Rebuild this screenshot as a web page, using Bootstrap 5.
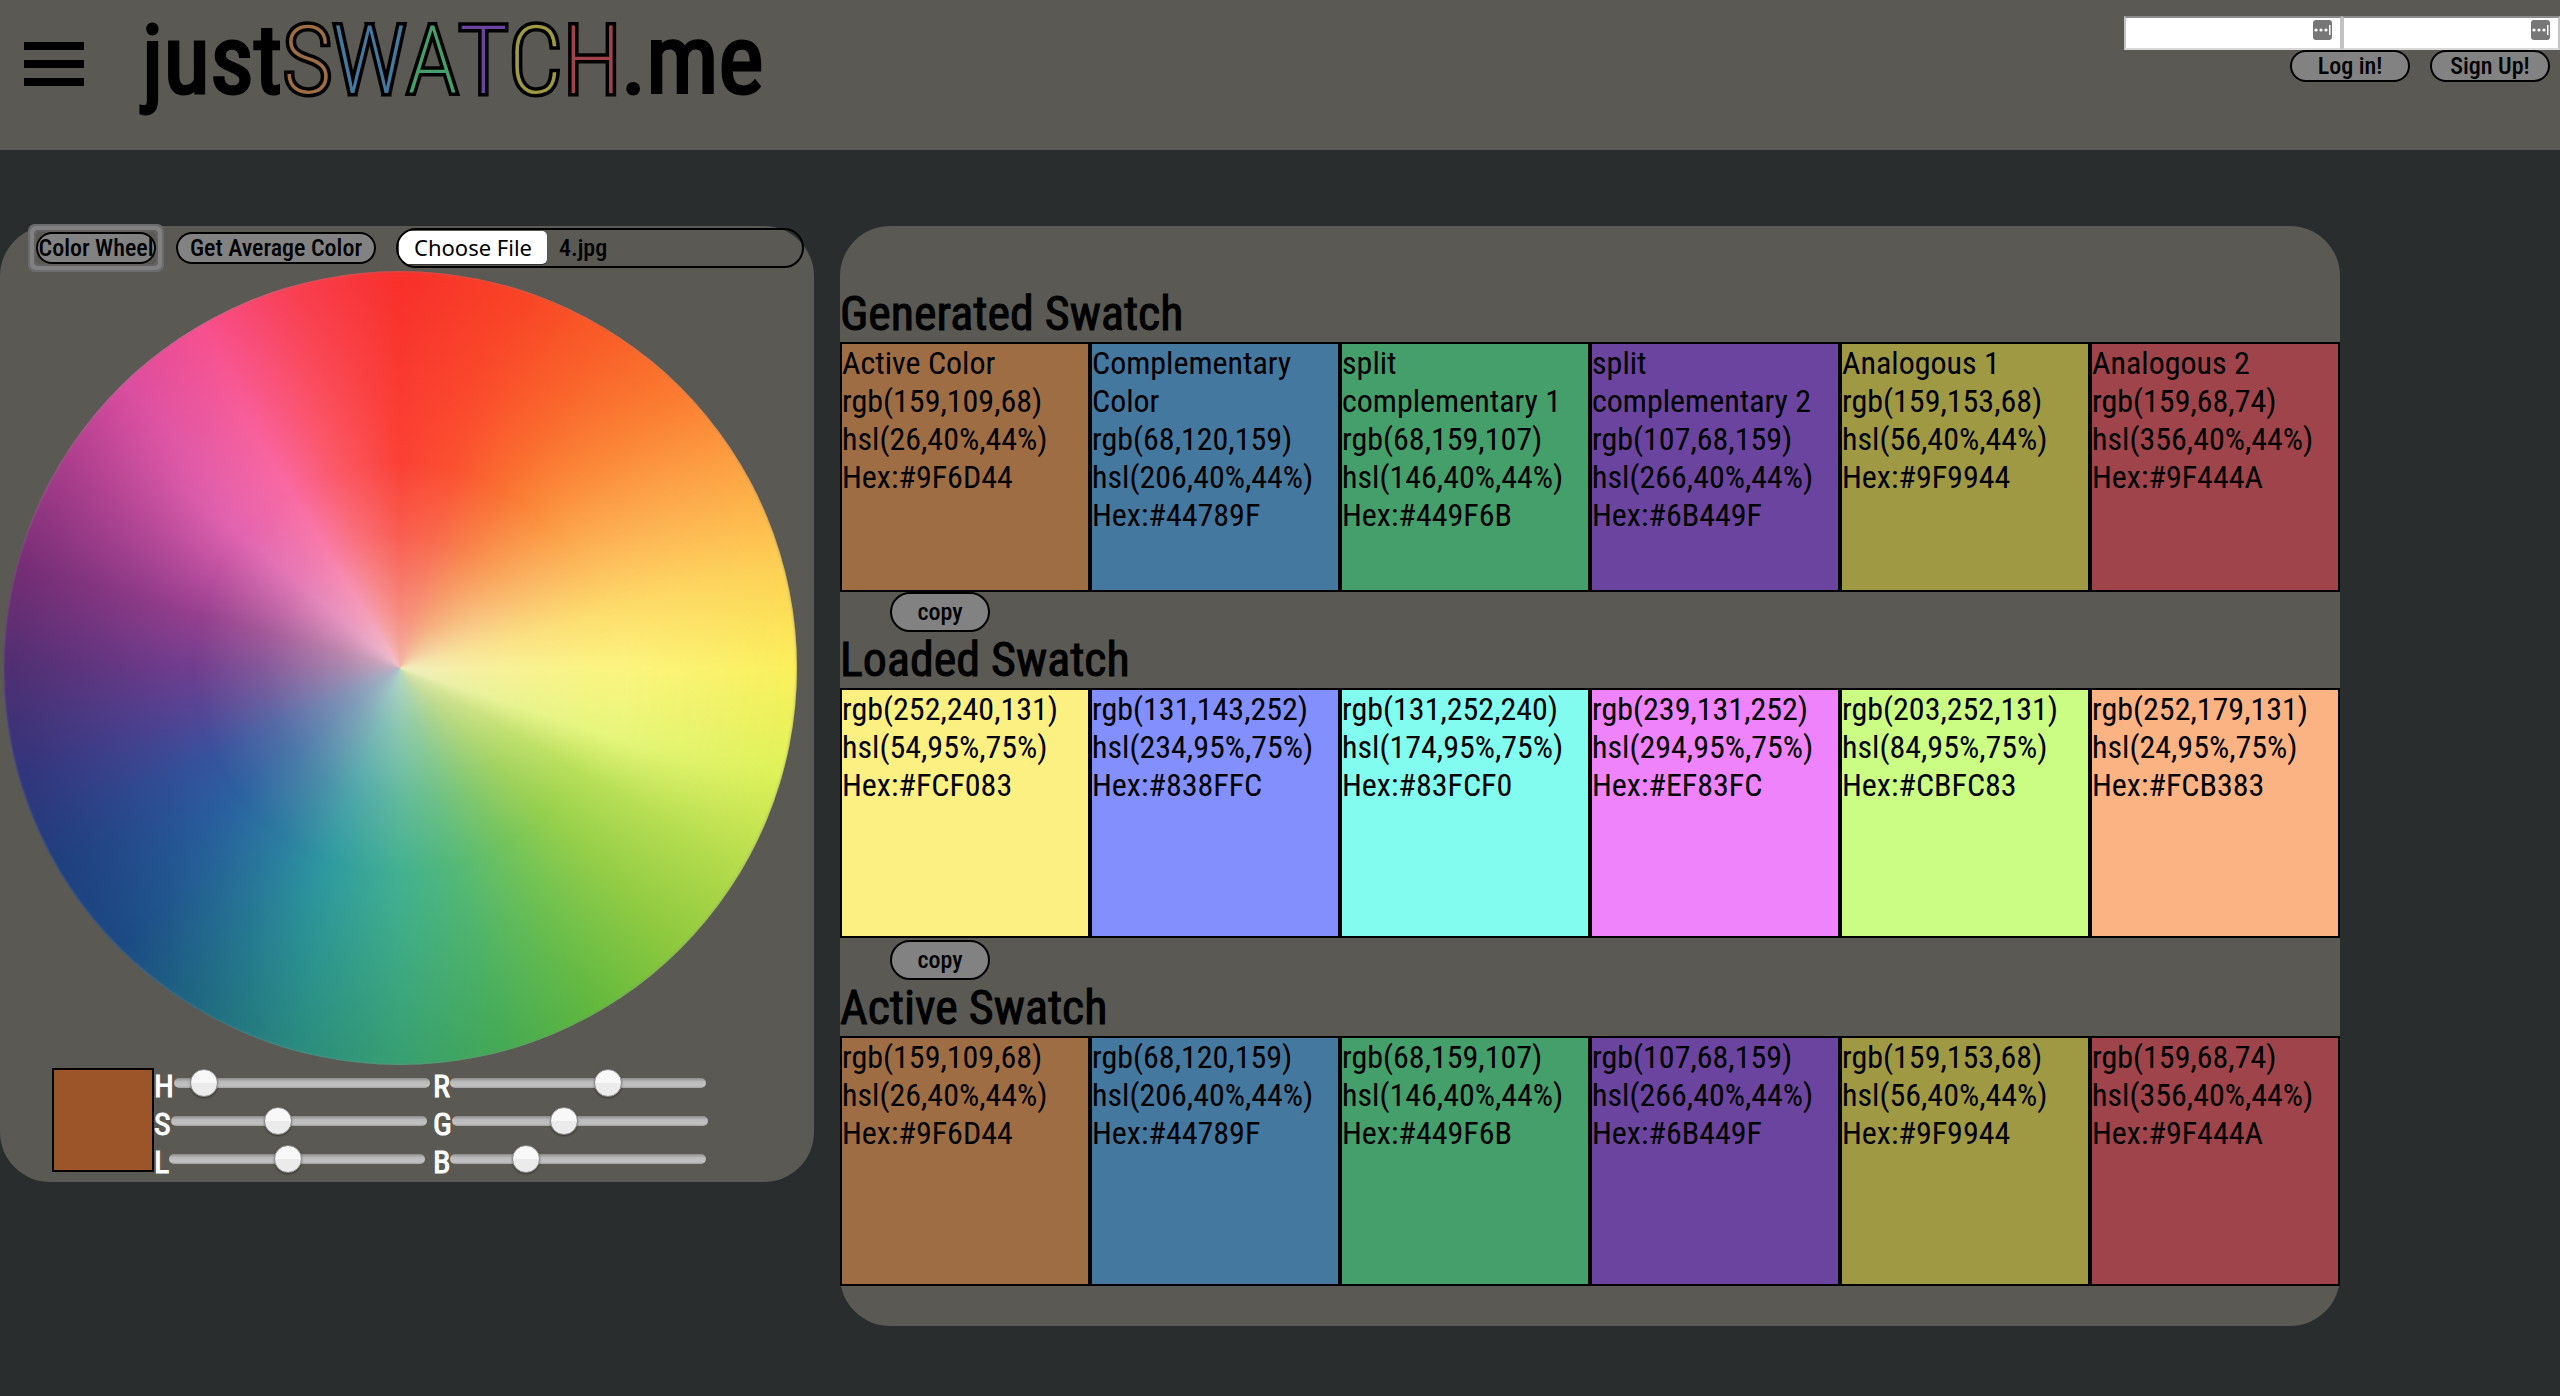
<!DOCTYPE html>
<html lang="en">
<head>
<meta charset="utf-8">
<meta name="viewport" content="width=device-width, initial-scale=1">
<title>justSWATCH.me</title>
<link href="https://cdn.jsdelivr.net/npm/bootstrap@5.3.0/dist/css/bootstrap.min.css" rel="stylesheet">
<style>
:root{--panel:#5a5953;--ground:#2a2d2e;--grey:#828282}
body{background:var(--ground);color:#000;font-family:"Roboto Condensed","Liberation Sans Narrow",Roboto,sans-serif;font-size:32px;line-height:38px}
.topbar{background:var(--panel);min-height:150px}
.menu-btn{width:60px;height:44px;margin:42px 0 0 24px}
.brand-name{font-size:96px;line-height:112px;font-weight:400;font-kerning:none;-webkit-text-stroke:3px #000;color:#000;margin:4px 0 0 58px}
.brand-name span{font-weight:200;font-size:94px;-webkit-text-stroke:7px #000;paint-order:stroke fill;padding-left:1px}
.c1{color:#9f6d44}.c2{color:#44789f}.c3{color:#449f6b}.c4{color:#6b449f}.c5{color:#9f9944}.c6{color:#9f444a}
.login-form{width:436px;padding-top:16px}
.login-box{position:relative;flex:1 1 0}
.login-box input{display:block;width:100%;height:34px;border:2px solid #c3c3c3;border-top-color:#8c8c8c;border-bottom-color:#d8d8d8;border-radius:0;padding:0 34px 0 6px;font-size:22px;background:#fff;outline:0}
.login-box svg{position:absolute;right:10px;top:4px}
.login-actions{gap:20px;padding-right:10px}
.pill{background:var(--grey);border:2px solid #000;border-radius:16px;height:32px;width:120px;font-size:24px;line-height:26px;font-weight:500;color:#000;padding:0;text-align:center;white-space:nowrap}
.pill-wide{width:200px}
.pill-copy{height:40px;width:100px;border-radius:20px;margin-left:50px}
.pill-on{overflow:hidden;display:block}
.focus-box{border-radius:2px;box-shadow:0 0 0 2px #636260,0 0 0 6px #818184,0 0 0 8px #6c6c6d}
.workspace{padding-top:76px;gap:26px}
.wheel-panel{background:var(--panel);border-radius:50px;width:814px;height:956px}
.wheel-tools{height:40px;margin:2px 10px 0 36px;gap:20px}
.file-pick{flex:1 1 0;min-width:0;height:40px;border:2px solid #000;border-radius:20px;font-size:24px;line-height:36px;font-weight:500;padding:0;color:#000}
.file-pick::file-selector-button{height:33px;width:148px;margin:1px 12px 0 1px;padding:0;border:0;border-radius:5px;background:#fff;font:400 22px/33px "Noto Sans",sans-serif;color:#000;box-shadow:0 1px 1px #333}
.wheel{width:794px;height:794px;margin:3px 0 0 3px;border-radius:50%;overflow:hidden;position:relative;box-shadow:inset 0 0 2px 1px #8886;
background:conic-gradient(#f8302b 0deg,#f94426 18deg,#f95e28 32deg,#fb7a30 45deg,#fda545 60deg,#fdd055 75deg,#fbf05c 90deg,#dff25a 105deg,#b6dc4c 120deg,#8fc93e 135deg,#63b93d 150deg,#45aa55 165deg,#38a072 180deg,#2a8c80 195deg,#206b82 210deg,#1c4b84 225deg,#20407e 240deg,#33367c 255deg,#502f72 270deg,#762e75 285deg,#a63c8a 300deg,#dc4ea0 316deg,#f7508f 330deg,#f93f50 345deg,#f8302b 360deg)}
.wheel::before,.wheel::after{content:"";position:absolute;inset:0;border-radius:50%}
.wheel::before{background:conic-gradient(#fb4034 0deg,#fb5030 15deg,#fa7030 30deg,#fb9440 45deg,#fcb85a 60deg,#fddd6c 75deg,#fbf480 90deg,#e6f67c 108deg,#b8df58 120deg,#95cf4c 135deg,#70c25c 150deg,#52b878 165deg,#42b090 180deg,#2e9aa0 200deg,#2b7ca0 215deg,#2a60a0 232deg,#36529d 245deg,#524595 257deg,#703d8e 270deg,#963f8e 285deg,#bc509f 297deg,#e264b0 310deg,#f969a2 328deg,#fb5868 342deg,#fb4034 360deg);-webkit-mask:radial-gradient(closest-side,#000 55%,transparent 98%);mask:radial-gradient(closest-side,#000 55%,transparent 98%)}
.wheel::after{background:radial-gradient(closest-side,#eee9dcb0 0,#f0e8d870 14%,#f0e8d82a 34%,transparent 52%)}
.mixer{margin:3px 0 0 52px;color:#fff;-webkit-text-stroke:1px #fff}
.chip{width:102px;height:104px;border:2px solid #000;background:#9b5528}
.channels{width:279px}
.slide-row{height:38px}
.slide-row label{line-height:36px}
input[type=range].tuner{-webkit-appearance:none;appearance:none;width:256px;height:28px;margin:1px 0 0;background:none;padding:0}
.tuner::-webkit-slider-runnable-track{height:10px;border-radius:5px;background:linear-gradient(#8b8b8b,#b9b9b9 35%,#c2c2c2 75%,#a4a4a4)}
.tuner::-webkit-slider-thumb{-webkit-appearance:none;width:28px;height:28px;margin-top:-9px;border-radius:50%;border:1px solid #8a8a8a;background:linear-gradient(#f8f8f8 50%,#ebebeb 50%);box-shadow:0 1px 2px #0006}
.swatch-panel{background:var(--panel);border-radius:50px;width:1500px;padding:60px 0 40px}
.swatch-panel h2{font-size:48px;line-height:56px;font-weight:400;-webkit-text-stroke:1px #000;margin:0}
.tile{flex:1 1 0;min-width:0;height:250px;border:2px solid #000;line-height:38px}
.copy-row{padding-top:2px}
</style>
</head>
<body>
<header class="topbar d-flex align-items-start">
<button class="menu-btn btn p-0 border-0 rounded-0 d-flex" type="button" aria-label="Menu"><svg width="60" height="44" viewBox="0 0 60 44"><path d="M0 0h60v8H0zM0 18h60v8H0zM0 36h60v8H0z"/></svg></button>
<h1 class="brand-name">just<span class="c1">S</span><span class="c2">W</span><span class="c3">A</span><span class="c4">T</span><span class="c5">C</span><span class="c6">H</span>.me</h1>
<form class="login-form ms-auto">
<div class="d-flex">
<div class="login-box"><input type="text" aria-label="User name"><svg width="19" height="20" viewBox="0 0 19 20"><rect width="19" height="20" rx="3" fill="#777"/><g fill="#fff"><circle cx="3" cy="10" r="1.6"/><circle cx="8" cy="10" r="1.6"/><circle cx="13" cy="10" r="1.6"/><path d="M16 5h1.500v10H16z"/></g></svg></div>
<div class="login-box"><input type="password" aria-label="Password"><svg width="19" height="20" viewBox="0 0 19 20"><rect width="19" height="20" rx="3" fill="#777"/><g fill="#fff"><circle cx="3" cy="10" r="1.6"/><circle cx="8" cy="10" r="1.6"/><circle cx="13" cy="10" r="1.6"/><path d="M16 5h1.500v10H16z"/></g></svg></div>
</div>
<div class="login-actions d-flex justify-content-end"><button class="pill" type="button">Log in!</button><button class="pill" type="button">Sign Up!</button></div>
</form>
</header>
<main class="workspace d-flex align-items-start">
<section class="wheel-panel flex-shrink-0">
<div class="wheel-tools d-flex align-items-center"><div class="focus-box"><button class="pill pill-on" type="button">Color Wheel</button></div><button class="pill pill-wide" type="button">Get Average Color</button><input class="file-pick" id="photo" type="file" aria-label="Photo"></div>
<div class="wheel"></div>
<div class="mixer d-flex">
<div class="chip"></div>
<div class="channels">
<div class="slide-row d-flex"><label for="h">H</label><input class="tuner" id="h" type="range" value="7"></div>
<div class="slide-row d-flex"><label for="s">S</label><input class="tuner" id="s" type="range" value="41"></div>
<div class="slide-row d-flex"><label for="l">L</label><input class="tuner" id="l" type="range" value="46"></div>
</div>
<div class="channels">
<div class="slide-row d-flex"><label for="r">R</label><input class="tuner" id="r" type="range" value="63"></div>
<div class="slide-row d-flex"><label for="g">G</label><input class="tuner" id="g" type="range" value="43"></div>
<div class="slide-row d-flex"><label for="b">B</label><input class="tuner" id="b" type="range" value="27"></div>
</div>
</div>
</section>
<section class="swatch-panel flex-shrink-0">
<h2>Generated Swatch</h2>
<div class="d-flex">
<div class="tile" style="background:#9f6d44">Active Color<br>rgb(159,109,68)<br>hsl(26,40%,44%)<br>Hex:#9F6D44</div>
<div class="tile" style="background:#44789f">Complementary Color<br>rgb(68,120,159)<br>hsl(206,40%,44%)<br>Hex:#44789F</div>
<div class="tile" style="background:#449f6b">split complementary 1<br>rgb(68,159,107)<br>hsl(146,40%,44%)<br>Hex:#449F6B</div>
<div class="tile" style="background:#6b449f">split complementary 2<br>rgb(107,68,159)<br>hsl(266,40%,44%)<br>Hex:#6B449F</div>
<div class="tile" style="background:#9f9944">Analogous 1<br>rgb(159,153,68)<br>hsl(56,40%,44%)<br>Hex:#9F9944</div>
<div class="tile" style="background:#9f444a">Analogous 2<br>rgb(159,68,74)<br>hsl(356,40%,44%)<br>Hex:#9F444A</div>
</div>
<button class="pill pill-copy d-block" type="button">copy</button>
<h2>Loaded Swatch</h2>
<div class="d-flex">
<div class="tile" style="background:#fcf083">rgb(252,240,131)<br>hsl(54,95%,75%)<br>Hex:#FCF083</div>
<div class="tile" style="background:#838ffc">rgb(131,143,252)<br>hsl(234,95%,75%)<br>Hex:#838FFC</div>
<div class="tile" style="background:#83fcf0">rgb(131,252,240)<br>hsl(174,95%,75%)<br>Hex:#83FCF0</div>
<div class="tile" style="background:#ef83fc">rgb(239,131,252)<br>hsl(294,95%,75%)<br>Hex:#EF83FC</div>
<div class="tile" style="background:#cbfc83">rgb(203,252,131)<br>hsl(84,95%,75%)<br>Hex:#CBFC83</div>
<div class="tile" style="background:#fcb383">rgb(252,179,131)<br>hsl(24,95%,75%)<br>Hex:#FCB383</div>
</div>
<div class="copy-row"><button class="pill pill-copy d-block" type="button">copy</button></div>
<h2>Active Swatch</h2>
<div class="d-flex">
<div class="tile" style="background:#9f6d44">rgb(159,109,68)<br>hsl(26,40%,44%)<br>Hex:#9F6D44</div>
<div class="tile" style="background:#44789f">rgb(68,120,159)<br>hsl(206,40%,44%)<br>Hex:#44789F</div>
<div class="tile" style="background:#449f6b">rgb(68,159,107)<br>hsl(146,40%,44%)<br>Hex:#449F6B</div>
<div class="tile" style="background:#6b449f">rgb(107,68,159)<br>hsl(266,40%,44%)<br>Hex:#6B449F</div>
<div class="tile" style="background:#9f9944">rgb(159,153,68)<br>hsl(56,40%,44%)<br>Hex:#9F9944</div>
<div class="tile" style="background:#9f444a">rgb(159,68,74)<br>hsl(356,40%,44%)<br>Hex:#9F444A</div>
</div>
</section>
</main>
<script src="https://cdn.jsdelivr.net/npm/bootstrap@5.3.0/dist/js/bootstrap.bundle.min.js"></script>
<script>
const picked = new DataTransfer();
picked.items.add(new File([''], '4.jpg', {type: 'image/jpeg'}));
document.getElementById('photo').files = picked.files;
</script>
</body>
</html>
